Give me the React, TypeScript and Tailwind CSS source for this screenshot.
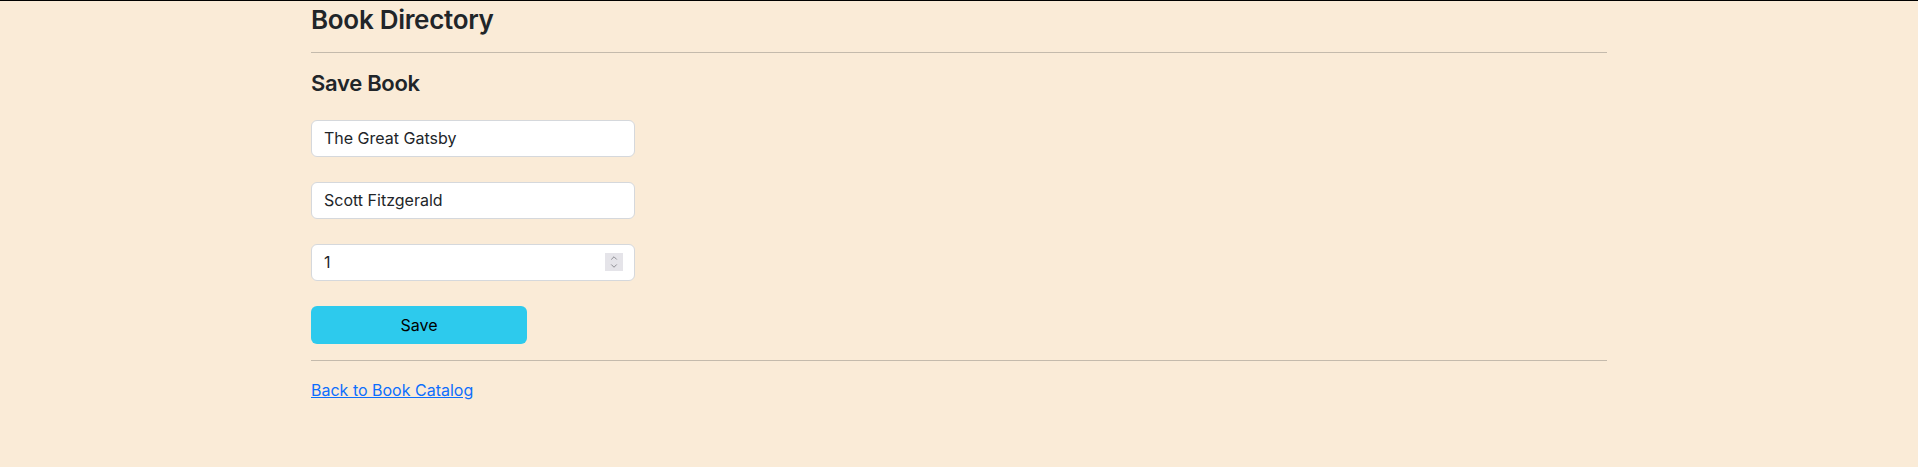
import { ChevronUp, ChevronDown } from 'lucide-react'

const font = { fontFamily: 'Inter, "Liberation Sans", sans-serif' }

export default function App() {
  return (
    <div className="min-h-screen bg-[#faebd7] border-t border-black text-[#212529]" style={font}>
      <div className="mx-auto w-[1296px]">
        <h1 className="pt-[3px] text-[26px] font-semibold leading-[1.2] tracking-[-0.3px]">Book Directory</h1>
        <hr className="mt-[17px] border-0 border-t border-[#c4baac]" />

        <h2 className="mt-[17px] text-[22px] font-semibold leading-[1.2] tracking-[-0.3px]">Save Book</h2>

        <form className="mt-[23px] flex flex-col gap-[25px]" onSubmit={e => e.preventDefault()}>
          <input
            type="text"
            defaultValue="The Great Gatsby"
            className="w-[324px] h-[37px] rounded-[6px] border border-[#d5d8dc] bg-white px-3 text-[16px] outline-none"
          />
          <input
            type="text"
            defaultValue="Scott Fitzgerald"
            className="w-[324px] h-[37px] rounded-[6px] border border-[#d5d8dc] bg-white px-3 text-[16px] outline-none"
          />
          <div className="relative w-[324px]">
            <input
              type="number"
              defaultValue={1}
              className="w-full h-[37px] rounded-[6px] border border-[#d5d8dc] bg-white px-3 text-[16px] outline-none [appearance:textfield] [&::-webkit-inner-spin-button]:appearance-none [&::-webkit-outer-spin-button]:appearance-none"
            />
            <div className="absolute right-[12px] top-[9px] flex h-[18px] w-[18px] flex-col items-center justify-center bg-[#e5e4e9] text-[#86868b]">
              <ChevronUp className="h-[10px] w-[10px] -mb-[1px]" strokeWidth={2.2} />
              <ChevronDown className="h-[10px] w-[10px] -mt-[1px]" strokeWidth={2.2} />
            </div>
          </div>
          <button
            type="submit"
            className="w-[216px] h-[38px] rounded-[6px] bg-[#2dcaed] text-[16px] text-black"
          >
            Save
          </button>
        </form>

        <hr className="mt-[16px] border-0 border-t border-[#c4baac]" />

        <a href="#" className="mt-[17px] inline-block text-[16px] leading-6 text-[#0d6efd] underline">
          Back to Book Catalog
        </a>
      </div>
    </div>
  )
}
